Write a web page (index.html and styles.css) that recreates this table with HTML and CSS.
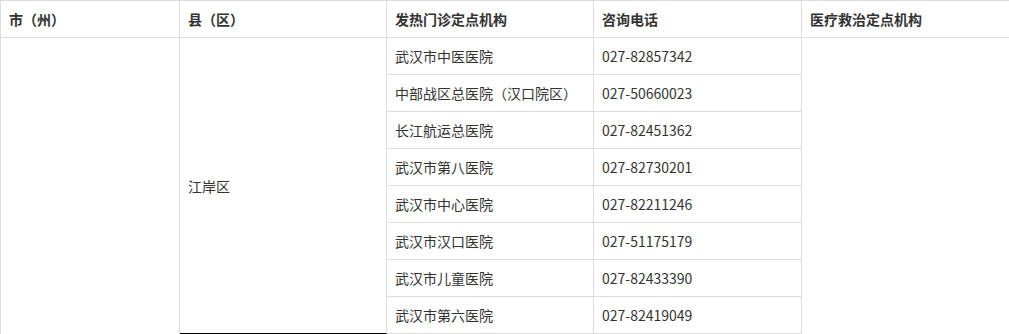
FILE: index.html
```html
<!DOCTYPE html>
<html lang="zh-CN">
<head>
<meta charset="utf-8">
<title>发热门诊定点机构</title>
<link rel="stylesheet" href="styles.css">
</head>
<body>
<div class="frame">
  <table class="clinics">
    <colgroup>
      <col class="c-city">
      <col class="c-county">
      <col class="c-clinic">
      <col class="c-phone">
      <col class="c-treat">
    </colgroup>
    <thead>
      <tr>
        <th>市（州）</th>
        <th>县（区）</th>
        <th>发热门诊定点机构</th>
        <th>咨询电话</th>
        <th>医疗救治定点机构</th>
      </tr>
    </thead>
    <tbody>
      <tr>
        <td rowspan="8" class="open-end"></td>
        <td rowspan="8" class="county">江岸区</td>
        <td>武汉市中医医院</td>
        <td>027-82857342</td>
        <td rowspan="8" class="open-end"></td>
      </tr>
      <tr><td>中部战区总医院（汉口院区）</td><td>027-50660023</td></tr>
      <tr><td>长江航运总医院</td><td>027-82451362</td></tr>
      <tr><td>武汉市第八医院</td><td>027-82730201</td></tr>
      <tr><td>武汉市中心医院</td><td>027-82211246</td></tr>
      <tr><td>武汉市汉口医院</td><td>027-51175179</td></tr>
      <tr><td>武汉市儿童医院</td><td>027-82433390</td></tr>
      <tr><td>武汉市第六医院</td><td>027-82419049</td></tr>
    </tbody>
  </table>
</div>
</body>
</html>
```

FILE: styles.css
```css
html, body {
  margin: 0;
  padding: 0;
  background: #fff;
}

.frame {
  width: 100%;
  height: 334px;
  overflow: hidden;
}

.clinics {
  border-collapse: separate;
  border-spacing: 0;
  table-layout: fixed;
  width: 1061px;
  border-top: 1px solid #dddddd;
  border-left: 1px solid #dddddd;
  font-family: "Noto Sans CJK SC", "Noto Sans", sans-serif;
  font-size: 14px;
  color: #333333;
}

.c-city { width: 179px; }
.c-county { width: 207px; }
.c-clinic { width: 207px; }
.c-phone { width: 208px; }
.c-treat { width: 259px; }

.clinics th,
.clinics td {
  box-sizing: border-box;
  padding: 8px 8px;
  line-height: 20px;
  text-align: left;
  vertical-align: middle;
  border-right: 1px solid #dddddd;
  border-bottom: 1px solid #dddddd;
  white-space: nowrap;
}

.clinics th {
  font-weight: bold;
  color: #333333;
}

.clinics td.open-end {
  border-bottom: 0;
}

.clinics td.county {
  border-bottom: 1px solid #000000;
}
```
